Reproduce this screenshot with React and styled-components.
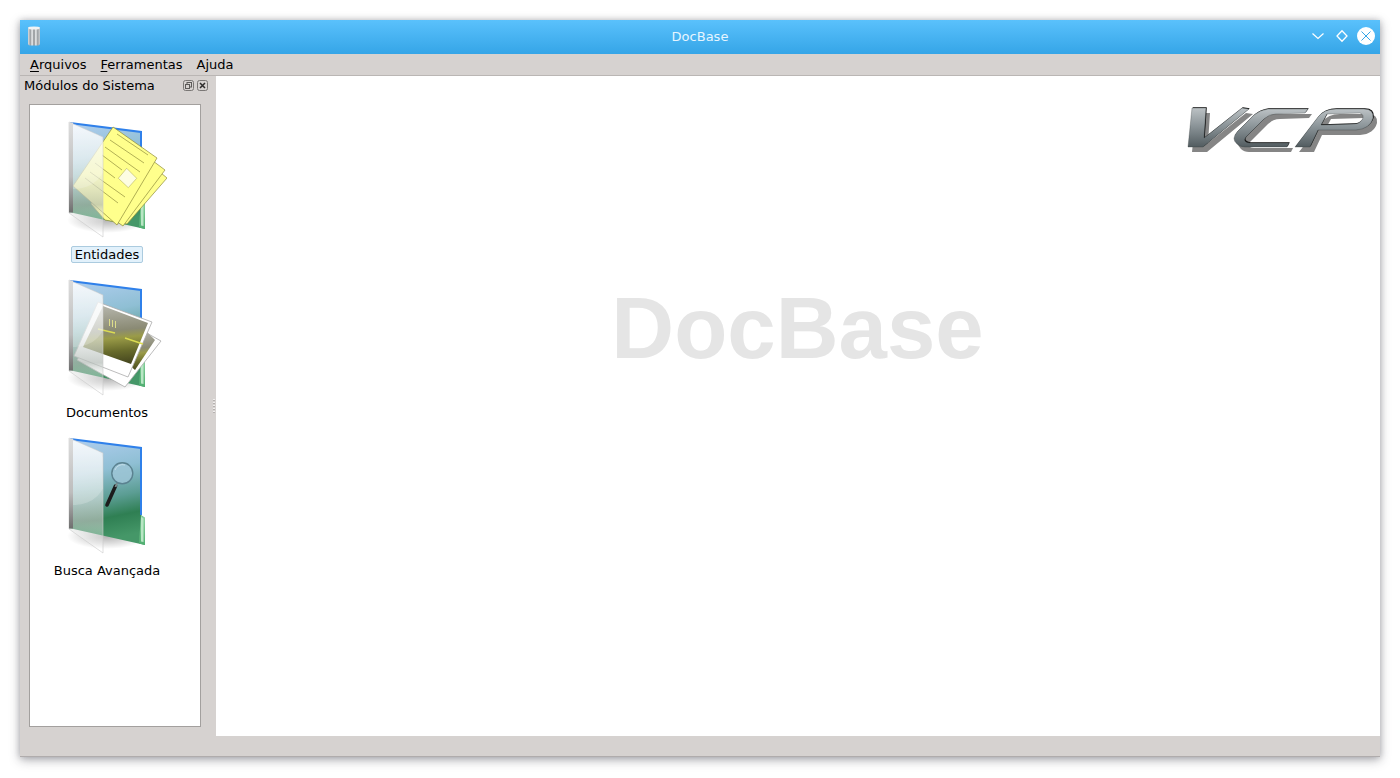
import React from "react";
import styled, { createGlobalStyle } from "styled-components";

const GlobalStyle = createGlobalStyle`
  html, body {
    margin: 0;
    padding: 0;
    height: 100%;
    background: #fff;
    overflow: hidden;
  }
  body {
    font-family: "DejaVu Sans", sans-serif;
    font-size: 13px;
    color: #000;
  }
`;

const Desktop = styled.div`
  padding: 20px 20px 0;
`;

const Window = styled.div`
  display: flex;
  flex-direction: column;
  height: 737px;
  background: #d6d2d0;
  border-bottom: 1px solid #b0acac;
  box-sizing: border-box;
  box-shadow: 0 3px 10px rgba(40, 40, 50, 0.36), 0 0 6px rgba(40, 40, 50, 0.2);
`;

const TitleBar = styled.header`
  display: flex;
  align-items: center;
  height: 34px;
  flex: none;
  box-sizing: border-box;
  padding: 0 5px 2px 7px;
  background: linear-gradient(#5ac1fc, #35a5e7);
`;

const AppIcon = styled.svg`
  width: 14px;
  height: 20px;
  flex: none;
`;

const WindowTitle = styled.div`
  flex: 1;
  text-align: center;
  color: #e6f5ff;
  font-size: 13px;
  padding-left: 50px;
`;

const WindowButtons = styled.div`
  display: flex;
  align-items: center;
  gap: 6px;
`;

const WindowButton = styled.svg`
  width: 18px;
  height: 18px;
  display: block;
`;

const MenuBar = styled.nav`
  display: flex;
  align-items: center;
  height: 22px;
  flex: none;
  box-sizing: border-box;
  padding: 0 3px 1px;
  border-bottom: 1px solid #bab6b4;
`;

const MenuItem = styled.div`
  padding: 0 7px;
  font-size: 13px;
  u {
    text-underline-offset: 2px;
  }
`;

const Body = styled.div`
  display: flex;
  height: 660px;
  flex: none;
`;

const Dock = styled.aside`
  width: 192px;
  flex: none;
  display: flex;
  flex-direction: column;
`;

const DockHeader = styled.div`
  display: flex;
  align-items: center;
  justify-content: space-between;
  height: 18px;
  flex: none;
  padding: 0 4px;
  font-size: 13px;
`;

const DockButtons = styled.div`
  display: flex;
  gap: 3px;
`;

const DockButton = styled.svg`
  width: 11px;
  height: 11px;
  display: block;
`;

const ModuleList = styled.div`
  flex: 1;
  margin: 10px 11px 9px 9px;
  background: #fff;
  border: 1px solid #a3a09e;
  padding-top: 9px;
  box-sizing: border-box;
`;

const ModuleItem = styled.div`
  width: 154px;
  height: 158px;
  display: flex;
  flex-direction: column;
  align-items: center;
`;

const ModuleIcon = styled.svg`
  width: 120px;
  height: 128px;
  flex: none;
  display: block;
`;

const ModuleLabel = styled.span`
  margin-top: 4px;
  height: 17px;
  line-height: 15px;
  box-sizing: border-box;
  padding: 0 2.5px;
  border: 1px solid ${(p) => (p.$selected ? "#abcbdf" : "transparent")};
  border-radius: 2px;
  background: ${(p) => (p.$selected ? "#e2f1fb" : "transparent")};
  font-size: 13px;
  white-space: nowrap;
`;

const Splitter = styled.div`
  width: 4px;
  flex: none;
  display: flex;
  align-items: center;
  justify-content: center;
  &::before {
    content: "";
    width: 2px;
    height: 15px;
    background: repeating-linear-gradient(#f0eeed 0 1px, #b5b1af 1px 2px, transparent 2px 3px);
  }
`;

const Central = styled.main`
  flex: 1;
  background: #fff;
  display: flex;
  flex-direction: column;
  padding-top: 26px;
`;

const Logo = styled.svg`
  width: 196px;
  height: 54px;
  flex: none;
  align-self: flex-end;
  display: block;
`;

const Watermark = styled.div`
  margin-top: 129px;
  padding-right: 1px;
  text-align: center;
  font-family: "Liberation Sans", Arial, sans-serif;
  font-weight: 700;
  font-size: 87px;
  line-height: 86px;
  color: #e5e5e5;
`;

const FolderDefs = ({ id }) => (
  <defs>
    <linearGradient id={`${id}-back`} x1="0" y1="0" x2="0.15" y2="1">
      <stop offset="0" stopColor="#b0cef0" />
      <stop offset="0.35" stopColor="#8fbfd4" />
      <stop offset="0.62" stopColor="#5b9d93" />
      <stop offset="0.8" stopColor="#2f7f53" />
      <stop offset="1" stopColor="#459768" />
    </linearGradient>
    <linearGradient id={`${id}-front`} x1="0" y1="0" x2="0" y2="1">
      <stop offset="0" stopColor="#fff" stopOpacity="0.85" />
      <stop offset="0.45" stopColor="#eef1f1" stopOpacity="0.6" />
      <stop offset="0.72" stopColor="#b5bdb8" stopOpacity="0.72" />
      <stop offset="0.86" stopColor="#fff" stopOpacity="0.3" />
      <stop offset="1" stopColor="#fff" stopOpacity="0.1" />
    </linearGradient>
    <linearGradient id={`${id}-spine`} x1="0" y1="0" x2="0" y2="1">
      <stop offset="0" stopColor="#dcdcdc" />
      <stop offset="0.6" stopColor="#bdbdbd" />
      <stop offset="1" stopColor="#6e6e6e" />
    </linearGradient>
    <linearGradient id={`${id}-tab`} x1="0" y1="0" x2="0" y2="1">
      <stop offset="0" stopColor="#8fd6a3" />
      <stop offset="1" stopColor="#4fae70" />
    </linearGradient>
    <radialGradient id={`${id}-shadow`}>
      <stop offset="0" stopColor="#000" stopOpacity="0.3" />
      <stop offset="1" stopColor="#000" stopOpacity="0" />
    </radialGradient>
    <clipPath id={`${id}-clip`}>
      <polygon points="22,8 56,23 56,123 22,99" />
    </clipPath>
  </defs>
);

const Folder = ({ id, children }) => (
  <ModuleIcon viewBox="0 0 120 128">
    <FolderDefs id={id} />
    <ellipse cx="60" cy="106" rx="40" ry="13" fill={`url(#${id}-shadow)`} />
    <polygon points="23,9 94,18 94,85 98,88 98,115 22,98" fill={`url(#${id}-back)`} />
    <polygon points="94,85 98,88 98,115 92,113.6" fill={`url(#${id}-tab)`} />
    <polygon points="94,87 96.5,88.5 96.5,112 94,111.5" fill="#b8e6c4" />
    <polyline points="23,9 94,18 94,85" fill="none" stroke="#2f80ea" strokeWidth="2" />
    {children}
    <polygon points="22,8 56,23 56,123 22,99" fill={`url(#${id}-front)`} stroke="#c9c9c9" strokeWidth="0.6" />
    <g clipPath={`url(#${id}-clip)`}>
      <circle cx="28" cy="43" r="32" fill="#fff" opacity="0.2" />
    </g>
    <rect x="22" y="8.5" width="4" height="90" fill={`url(#${id}-spine)`} />
  </ModuleIcon>
);

const Sheet = ({ points }) => (
  <polygon points={points} fill="#ffff8c" stroke="#8e8b3a" strokeWidth="0.7" />
);

const PapersArt = () => (
  <g>
    <Sheet points="72,24 120,64 80,110 58,106 44,90" />
    <Sheet points="70,20 118,56 76,112 56,98 40,80" />
    <Sheet points="66,13 110,44 70,111 26,72" />
    <g stroke="#a9a74e" strokeWidth="0.9">
      <line x1="70" y1="20" x2="101" y2="41" />
      <line x1="63" y1="26" x2="97" y2="49" />
      <line x1="58" y1="33" x2="93" y2="58" />
      <line x1="55" y1="41" x2="75" y2="56" />
      <line x1="48" y1="49" x2="68" y2="64" />
      <line x1="43" y1="58" x2="78" y2="83" />
      <line x1="38" y1="64" x2="71" y2="89" />
    </g>
    <polygon points="79.7,54.3 89.7,64.3 81.3,73.7 71.3,64.3" fill="#fdfde2" stroke="#a9a74e" strokeWidth="0.5" />
  </g>
);

const Photo = ({ outer, inner }) => (
  <g>
    <polygon points={outer} fill="#fff" stroke="#ababab" strokeWidth="0.8" />
    <polygon points={inner} fill="url(#photo-img)" />
  </g>
);

const PhotosArt = () => (
  <g>
    <defs>
      <linearGradient id="photo-img" x1="0.45" y1="0" x2="0.55" y2="1">
        <stop offset="0" stopColor="#b4b4aa" />
        <stop offset="0.42" stopColor="#8a8a74" />
        <stop offset="0.55" stopColor="#9a9b48" />
        <stop offset="0.78" stopColor="#676a2b" />
        <stop offset="1" stopColor="#45461f" />
      </linearGradient>
    </defs>
    <Photo outer="62,40 114,69 78,115 30,88" inner="100,60 108,68 88,98 82,93" />
    <Photo outer="51,30 105,50 81,105 27,84" inner="56,34 101,51 84,92 36,75" />
    <g stroke="#dcdc52" strokeWidth="1.4">
      <line x1="51" y1="57" x2="68" y2="61" />
      <line x1="78" y1="66" x2="96" y2="72" />
    </g>
    <g fill="#dddc8a">
      <rect x="62" y="47" width="1" height="7" />
      <rect x="65" y="48" width="1" height="7" />
      <rect x="68" y="49" width="1" height="7" />
    </g>
  </g>
);

const MagnifierArt = () => (
  <g>
    <line x1="68.5" y1="56" x2="60" y2="75" stroke="#1c1c1c" strokeWidth="3.6" strokeLinecap="round" />
    <line x1="70.5" y1="52" x2="68.5" y2="57" stroke="#7d8c8e" strokeWidth="2" />
    <circle cx="75.3" cy="43.3" r="10.5" fill="#9dc6d6" fillOpacity="0.85" stroke="#5b8290" strokeWidth="1.4" />
    <path d="M68 40a8 8 0 0 1 10-5" fill="none" stroke="#c4dde8" strokeWidth="1" />
  </g>
);

const VcpLogo = () => {
  const v = "M8 6L22 6L20 36L58 6L65 7L19 45L4 45Z";
  const c = "M124 7L84 7Q76 8 70 13L53 30Q47 37 53 42Q56 45 61 45L103 45L105 41L66 41Q58 40 62 35L80 17Q85 12 92 12L121 11Z";
  const p = "M111 45L126 45L134 28L172 28Q186 27 189 16Q190 7 180 7L152 7Q140 7 134 15ZM143 12L176 11Q181 13 178 18Q175 22 170 22L137 23Z";
  return (
    <Logo viewBox="0 0 196 54">
      <defs>
        <linearGradient id="vcp-metal" x1="0" y1="0" x2="0" y2="1">
          <stop offset="0" stopColor="#bcc2c5" />
          <stop offset="0.45" stopColor="#8c9599" />
          <stop offset="1" stopColor="#525c60" />
        </linearGradient>
        <filter id="vcp-blur" x="-5%" y="-5%" width="110%" height="120%">
          <feGaussianBlur stdDeviation="0.7" />
        </filter>
      </defs>
      <g fill="#858585" fillRule="evenodd" transform="translate(4 5)" filter="url(#vcp-blur)">
        <path d={v} />
        <path d={c} />
        <path d={p} />
      </g>
      <g fill="#111" fillRule="evenodd" transform="translate(0.8 -0.8)">
        <path d={v} />
        <path d={c} />
        <path d={p} />
      </g>
      <g fill="url(#vcp-metal)" fillRule="evenodd" stroke="#2a2e30" strokeWidth="0.3">
        <path d={v} />
        <path d={c} />
        <path d={p} />
      </g>
    </Logo>
  );
};

const modules = [
  { id: "entidades", label: "Entidades", selected: true, art: <PapersArt /> },
  { id: "documentos", label: "Documentos", art: <PhotosArt /> },
  { id: "busca", label: "Busca Avançada", art: <MagnifierArt /> },
];

const App = () => (
  <>
    <GlobalStyle />
    <Desktop>
      <Window>
        <TitleBar>
          <AppIcon viewBox="0 0 14 20">
            <defs>
              <linearGradient id="app-can" x1="0" y1="0" x2="1" y2="0">
                <stop offset="0" stopColor="#d9dde0" />
                <stop offset="0.2" stopColor="#9da1a4" />
                <stop offset="0.35" stopColor="#eceeef" />
                <stop offset="0.5" stopColor="#85898c" />
                <stop offset="0.65" stopColor="#eceeef" />
                <stop offset="0.8" stopColor="#9da1a4" />
                <stop offset="1" stopColor="#c9cdd0" />
              </linearGradient>
            </defs>
            <rect x="1" y="1" width="12" height="18.5" rx="2" fill="url(#app-can)" />
            <ellipse cx="7" cy="2" rx="6" ry="1.6" fill="#f1f3f4" />
          </AppIcon>
          <WindowTitle>DocBase</WindowTitle>
          <WindowButtons>
            <WindowButton viewBox="0 0 18 18">
              <polyline points="3.5,6.5 9,11.5 14.5,6.5" fill="none" stroke="#fff" strokeWidth="1.2" />
            </WindowButton>
            <WindowButton viewBox="0 0 18 18">
              <polygon points="9,3.8 14,9 9,14.2 4,9" fill="none" stroke="#fff" strokeWidth="1.3" />
            </WindowButton>
            <WindowButton viewBox="0 0 18 18">
              <circle cx="9" cy="9" r="9" fill="#fff" />
              <path d="M4.5 4.5L13.5 13.5M13.5 4.5L4.5 13.5" stroke="#36a6e8" strokeWidth="1" />
            </WindowButton>
          </WindowButtons>
        </TitleBar>
        <MenuBar>
          <MenuItem><u>A</u>rquivos</MenuItem>
          <MenuItem><u>F</u>erramentas</MenuItem>
          <MenuItem>A<u>j</u>uda</MenuItem>
        </MenuBar>
        <Body>
          <Dock>
            <DockHeader>
              Módulos do Sistema
              <DockButtons>
                <DockButton viewBox="0 0 11 11">
                  <rect x="0.5" y="0.5" width="10" height="10" rx="2" fill="none" stroke="#7a7775" />
                  <rect x="4" y="2.5" width="4.5" height="4.5" fill="none" stroke="#5c5a58" />
                  <rect x="2.5" y="4.5" width="4" height="4" fill="#d6d2d0" stroke="#5c5a58" />
                </DockButton>
                <DockButton viewBox="0 0 11 11">
                  <rect x="0.5" y="0.5" width="10" height="10" rx="2" fill="none" stroke="#7a7775" />
                  <path d="M3 3L8 8M8 3L3 8" stroke="#2e2d2c" strokeWidth="1.5" />
                </DockButton>
              </DockButtons>
            </DockHeader>
            <ModuleList>
              {modules.map((m) => (
                <ModuleItem key={m.id}>
                  <Folder id={m.id}>{m.art}</Folder>
                  <ModuleLabel $selected={m.selected}>{m.label}</ModuleLabel>
                </ModuleItem>
              ))}
            </ModuleList>
          </Dock>
          <Splitter />
          <Central>
            <VcpLogo />
            <Watermark>DocBase</Watermark>
          </Central>
        </Body>
      </Window>
    </Desktop>
  </>
);

export default App;
